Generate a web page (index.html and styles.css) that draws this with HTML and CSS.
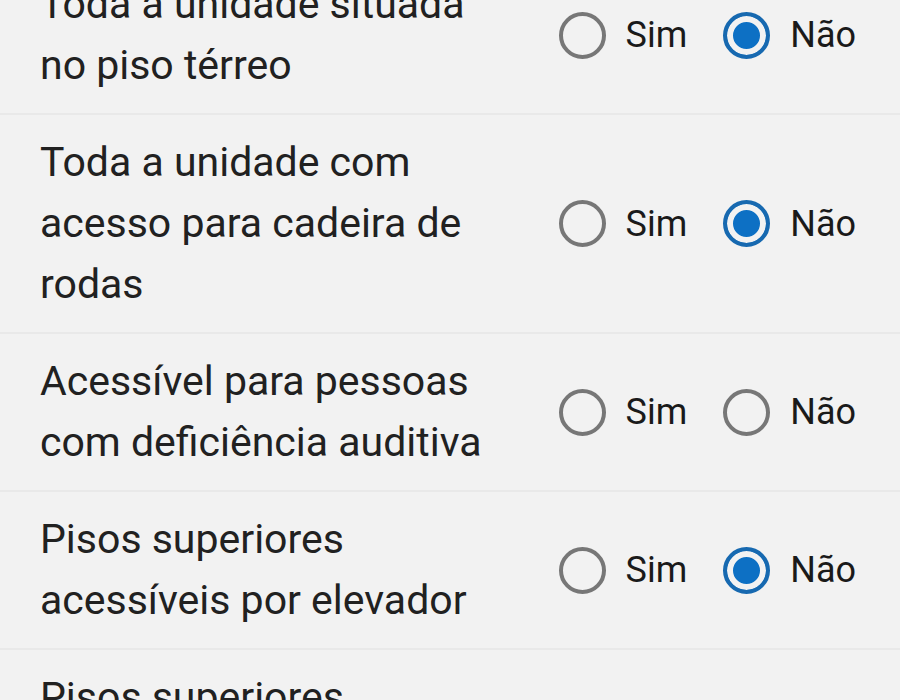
FILE: index.html
```html
<!DOCTYPE html>
<html>
<head>
    <meta charset="utf-8" />
    <title>Acessibilidade</title>
    <link rel="stylesheet" href="styles.css">
</head>
<body>
<div class="lista">
    <div class="item">
        <div class="pergunta">Toda a unidade situada no piso térreo</div>
        <div class="opcoes">
            <label class="opcao"><input type="radio" name="r1"><span>Sim</span></label>
            <label class="opcao"><input type="radio" name="r1" checked><span>Não</span></label>
        </div>
    </div>
    <div class="item">
        <div class="pergunta">Toda a unidade com acesso para cadeira de rodas</div>
        <div class="opcoes">
            <label class="opcao"><input type="radio" name="r2"><span>Sim</span></label>
            <label class="opcao"><input type="radio" name="r2" checked><span>Não</span></label>
        </div>
    </div>
    <div class="item">
        <div class="pergunta">Acessível para pessoas com deficiência auditiva</div>
        <div class="opcoes">
            <label class="opcao"><input type="radio" name="r3"><span>Sim</span></label>
            <label class="opcao"><input type="radio" name="r3"><span>Não</span></label>
        </div>
    </div>
    <div class="item">
        <div class="pergunta">Pisos superiores acessíveis por elevador</div>
        <div class="opcoes">
            <label class="opcao"><input type="radio" name="r4"><span>Sim</span></label>
            <label class="opcao"><input type="radio" name="r4" checked><span>Não</span></label>
        </div>
    </div>
    <div class="item">
        <div class="pergunta">Pisos superiores acessíveis por escada</div>
        <div class="opcoes">
            <label class="opcao"><input type="radio" name="r5"><span>Sim</span></label>
            <label class="opcao"><input type="radio" name="r5"><span>Não</span></label>
        </div>
    </div>
</div>
</body>
</html>
```

FILE: styles.css
```css
*{margin:0;padding:0;box-sizing:border-box;}
html,body{background:#f2f2f2;overflow:hidden;}
body{font-family:Roboto,"Noto Sans",sans-serif;color:#212121;}
.lista{margin-top:-43px;}
.item{
    display:flex;
    align-items:center;
    padding:17px 44px 17px 40px;
    border-bottom:2px solid #e9e9e9;
}
.pergunta{
    width:480px;
    font-size:41px;
    line-height:61px;
}
.opcoes{
    margin-left:auto;
    display:flex;
    align-items:center;
    gap:36px;
}
.opcao{
    display:flex;
    align-items:center;
    gap:20px;
    font-size:36px;
    color:#1a1a1a;
}
.opcao input{
    appearance:none;
    -webkit-appearance:none;
    width:47px;
    height:47px;
    border:4px solid #777;
    border-radius:50%;
    background:#f2f2f2;
    margin:0;
}
.opcao input:checked{
    border-color:#1769b0;
    background:#0d70c4;
    box-shadow:inset 0 0 0 6px #f2f2f2;
}
```
